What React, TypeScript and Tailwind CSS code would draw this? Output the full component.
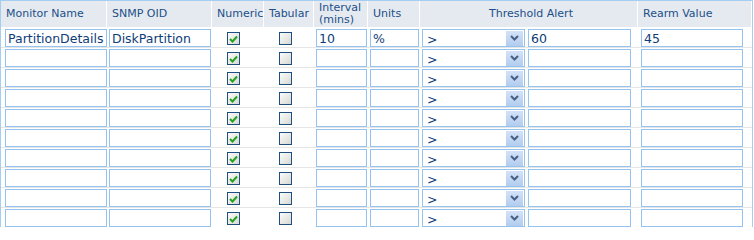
import React from 'react';

const cols = 'grid grid-cols-[106px_105px_52px_50px_54px_52px_218px_114px]';

type Row = {
  name: string;
  oid: string;
  interval: string;
  units: string;
  threshold: string;
  rearm: string;
};

const rows: Row[] = [
  { name: 'PartitionDetails', oid: 'DiskPartition', interval: '10', units: '%', threshold: '60', rearm: '45' },
  ...Array.from({ length: 9 }, () => ({ name: '', oid: '', interval: '', units: '', threshold: '', rearm: '' })),
];

const TextBox = ({ value, className }: { value: string; className: string }) => (
  <div
    className={`h-[18px] border border-[#94c3f0] bg-white pl-[2px] text-[12.5px] leading-[17px] text-[#0f3d78] whitespace-nowrap overflow-hidden ${className}`}
  >
    {value}
  </div>
);

const CheckBox = ({ checked }: { checked: boolean }) => (
  <div className="ml-[15px] mt-[3px] h-[13px] w-[13px] border border-[#1e4f7e] bg-gradient-to-br from-[#fbfbfa] to-[#d9d9d3] flex items-center justify-center">
    {checked && (
      <svg width="9" height="8" viewBox="0 0 9 8">
        <path d="M1 4 L3.5 6.5 L8 1.5" fill="none" stroke="#22a322" strokeWidth="2" />
      </svg>
    )}
  </div>
);

const Select = () => (
  <div className="ml-[2px] flex h-[18px] w-[103px] items-center border border-[#94c3f0] bg-white">
    <span className="flex-1 pl-[4px] pt-[3px] text-[12.5px] leading-[14px] text-[#0f3d78]">&gt;</span>
    <div className="mr-px flex h-[15px] w-[17px] items-center justify-center bg-gradient-to-b from-[#d3e2f7] to-[#b3cdef]">
      <svg width="9" height="6" viewBox="0 0 9 6">
        <path d="M1 1 L4.5 4.5 L8 1" fill="none" stroke="#4a5f85" strokeWidth="2" />
      </svg>
    </div>
  </div>
);

const headers: { label: React.ReactNode; center?: boolean }[] = [
  { label: 'Monitor Name' },
  { label: 'SNMP OID' },
  { label: 'Numeric' },
  { label: 'Tabular' },
  { label: (<span className="block leading-[12px]">Interval<br />(mins)</span>) },
  { label: 'Units' },
  { label: 'Threshold Alert', center: true },
  { label: 'Rearm Value' },
];

export default function App() {
  return (
    <div className="h-[227px] w-[754px] overflow-hidden bg-white font-['DejaVu_Sans',sans-serif]">
      <div className="w-[753px] border-l border-r border-t border-[#a5cdf2]">
        <div className={`${cols} h-[27px] border-b border-white`}>
          {headers.map((h, i) => (
            <div
              key={i}
              className={`flex items-center border-r border-white bg-[#e5eaf1] pl-[5px] text-[11px] text-[#1c4f88] ${
                h.center ? 'justify-center pl-0' : ''
              }`}
            >
              {h.label}
            </div>
          ))}
        </div>
        {rows.map((r, i) => (
          <div key={i} className={`${cols} h-[20px] border-b border-[#e6e6e6] pt-px`}>
            <div><TextBox value={r.name} className="ml-[4px] w-[102px]" /></div>
            <div><TextBox value={r.oid} className="ml-[2px] w-[102px]" /></div>
            <div><CheckBox checked /></div>
            <div><CheckBox checked={false} /></div>
            <div><TextBox value={r.interval} className="ml-[2px] w-[51px]" /></div>
            <div><TextBox value={r.units} className="ml-[2px] w-[49px]" /></div>
            <div className="flex gap-[3px]">
              <Select />
              <TextBox value={r.threshold} className="w-[103px]" />
            </div>
            <div><TextBox value={r.rearm} className="ml-[3px] w-[102px]" /></div>
          </div>
        ))}
      </div>
    </div>
  );
}
